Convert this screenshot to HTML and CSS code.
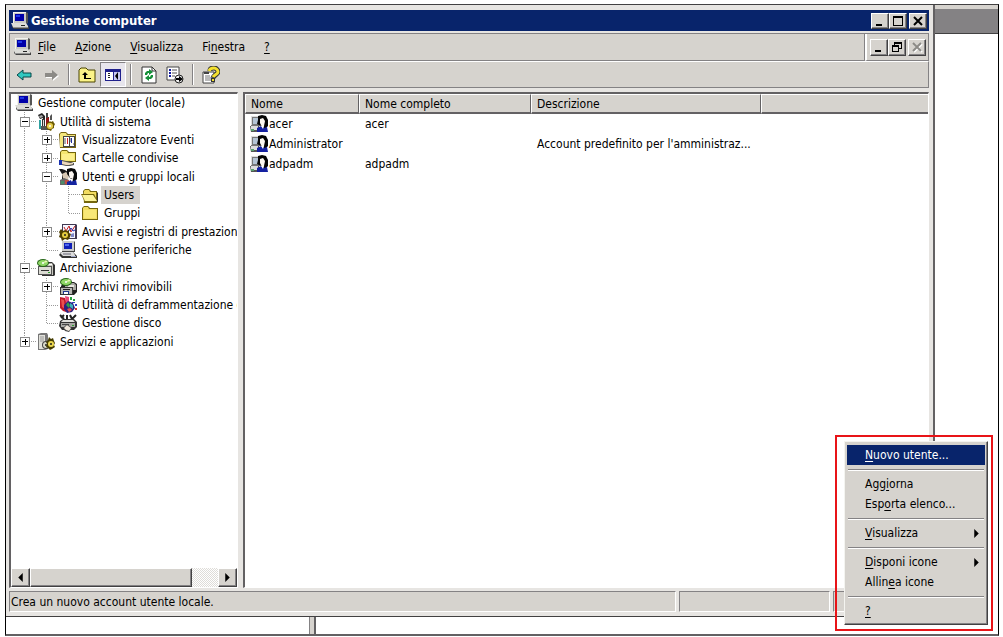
FILE: index.html
```html
<!DOCTYPE html>
<html lang="it">
<head>
<meta charset="utf-8">
<title>Gestione computer</title>
<link rel="stylesheet" href="styles.css">
</head>
<body>
<svg class="defs" aria-hidden="true">
  <symbol id="computer" viewBox="0 0 18 18">
    <path d="M3 0h12l2 1v10l-2 1H3z" fill="#555"/><path d="M2 0h13v11H2z" fill="#c8c8c4"/><path d="M2 0h13v1H3v10H2z" fill="#f4f4f0"/>
    <path d="M4 2h9v7H4z" fill="#0000a8"/><path d="M5 3h4v2H5z" fill="#2038e8"/>
    <path d="M1 12h14l3 3v2H3l-2-2z" fill="#444"/><path d="M0 11h15l2 3v1H2z" fill="#dcdcd8"/><path d="M2 15h15v1H2z" fill="#909090"/><path d="M10 13h4v1h-4z" fill="#222"/>
  </symbol>
  <symbol id="tools" viewBox="0 0 18 18">
    <path d="M1 2l4-2 3 3v5H6V5L3 6z" fill="#222"/><path d="M2 3l3-1 1 2-3 1z" fill="#a8a8a8"/>
    <path d="M2 7h2v9H2z" fill="#30a0a0"/><path d="M5 6h3v11H5z" fill="#333"/><path d="M6 7h1v9H6z" fill="#ddd"/>
    <path d="M9 4h3v10H9z" fill="#901818"/><path d="M9 0h2v5H9z" fill="#444"/><path d="M13 3l2-2v6h-2z" fill="#555"/><path d="M4 13h8v4H4z" fill="#555"/>
    <path d="M13 8l1 1 2-1 1 2 1 1-1 2v2l-2 1-1 2-2-1-2-1-1-2 1-2v-2l2-1z" fill="#6b5a00"/><circle cx="13" cy="13" r="3" fill="#e8cf50"/><circle cx="13" cy="13" r="1" fill="#fff"/>
  </symbol>
  <symbol id="eventi" viewBox="0 0 18 18">
    <path d="M0 3l2-2h5l2 2h8v14H1z" fill="#786410"/><path d="M1 3l1-1h5l1 2h8v12H1z" fill="#f4e67c"/>
    <path d="M4 5h12v11H4z" fill="#444"/><path d="M5 6h5v9H5zM11 6h4v9h-4z" fill="#fff"/><path d="M5 8h2M5 10h2M5 12h2M11 8h1M11 10h1M14 13h1" stroke="#555"/><path d="M8 7h1v6H8z" fill="#d02020"/><path d="M12 7h1v5h-1z" fill="#2030a0"/>
  </symbol>
  <symbol id="condivise" viewBox="0 0 18 18">
    <path d="M1 3l2-2h5l2 2h7v10H1z" fill="#74660c"/><path d="M2 3l1-1h5l1 2h7v8H2z" fill="#f4e670"/><path d="M3 5h12v6H3z" fill="#fcf08c"/>
    <path d="M0 11h3v5H0z" fill="#1830b0"/><path d="M3 11l4 1 5 1 3 1v2l-4 1H7l-4-1z" fill="#555"/><path d="M3 12l4 1 4 1h3v1l-4 1H7l-4-1z" fill="#edd8ba"/>
  </symbol>
  <symbol id="utenti" viewBox="0 0 18 18">
    <path d="M0 1h3l3 1 3 2v8H3V6z" fill="#181818"/><path d="M3 6l4-2 3 3-1 5-3 1-2-3z" fill="#d8c8b4"/>
    <path d="M1 12l4-2 5 2v5H1z" fill="#686868"/><path d="M2 13h3v3H2z" fill="#4c8c68"/><path d="M6 12h4v4H6z" fill="#c05040"/>
    <path d="M8 1l4-1 4 1 2 4v6l-3 3-4-4-3-4z" fill="#080808"/><path d="M10 4l3-1 2 3-1 5-3-1-1-3z" fill="#fbf6f0"/>
    <path d="M8 14l4-2 2 1 3-1 1 5H8z" fill="#1424a0"/><path d="M11 11h3l-1 3z" fill="#fff"/>
  </symbol>
  <symbol id="aperta" viewBox="0 0 18 18">
    <path d="M2 5l2-2h4l2 2h6v12H3z" fill="#74660c"/><path d="M3 5l1-1h4l1 2h6v9H3z" fill="#f2dc60"/><path d="M0 8h13l4 8H4z" fill="#74660c"/><path d="M1 9h11l4 6H4z" fill="#fcf49c"/><path d="M16 6l1 1v10l-1-2z" fill="#333"/>
  </symbol>
  <symbol id="cartella" viewBox="0 0 18 18">
    <path d="M1 4l2-2h4l2 2h8v12H1z" fill="#74660c"/><path d="M2 4l1-1h4l1 2h8v10H2z" fill="#f2dc60"/><path d="M3 6h12v8H3z" fill="#f8e878"/>
  </symbol>
  <symbol id="avvisi" viewBox="0 0 18 18">
    <path d="M3 1h14l1 1v14H3z" fill="#403850"/><path d="M4 2h12v13H4z" fill="#f6f6ff"/><path d="M5 4l2 4 3-5 2 6 4-6" fill="none" stroke="#c02020"/><path d="M9 9l3-4 2 3 2-1" fill="none" stroke="#2030b0"/><path d="M12 11l3-1v4h-3z" fill="#8088c8"/>
    <path d="M2 6l2 2 2-1 2 1 2-1v3l2 1-1 3-2 3-3-1-3 2-1-3-2-1 1-3-1-2z" fill="#504000"/><circle cx="6" cy="12" r="3" fill="#e4cc40"/><circle cx="6" cy="12" r="1" fill="#222"/>
  </symbol>
  <symbol id="periferiche" viewBox="0 0 18 18">
    <path d="M3 0h12l1 1v10H3z" fill="#444"/><path d="M3 0h12v10H3z" fill="#ccc"/><path d="M5 2h8v6H5z" fill="#1020b8"/><path d="M6 3h4v2H6z" fill="#5068f0"/>
    <path d="M2 11h12l4 4v2H3l-3-3z" fill="#333"/><path d="M1 12l2-1h11l2 3v1H4z" fill="#dcdcdc"/><path d="M4 13h8" stroke="#667"/><path d="M12 15h5v1h-5z" fill="#a0a8c8"/>
  </symbol>
  <symbol id="archiviazione" viewBox="0 0 18 18">
    <path d="M5 3h10l3 3v10l-1 1H5z" fill="#333"/><path d="M6 5l9-1 1 2v10H6z" fill="#c8c8c0"/><path d="M11 5h4v1h-4z" fill="#fff"/><path d="M1 7h14v9H1z" fill="#555"/><path d="M2 8h12v7H2z" fill="#dcdcd4"/><path d="M4 11h8v1H4z" fill="#333"/><path d="M11 13h2v1h-2z" fill="#30a030"/>
    <ellipse cx="6" cy="4" rx="6" ry="4" fill="#286818"/><ellipse cx="6" cy="4" rx="5" ry="3" fill="#90d868"/><path d="M6 4l3-3 2 2z" fill="#e8f8b0"/><circle cx="6" cy="4" r="1" fill="#fff"/>
  </symbol>
  <symbol id="rimovibili" viewBox="0 0 18 18">
    <path d="M5 4h10l3 2v8l-3 3H2V8z" fill="#222"/><path d="M6 5h9l2 2v5H6z" fill="#a8a8a4"/><path d="M9 7h6v2H9z" fill="#e8e8e0"/><path d="M1 9h13v8H1z" fill="#333"/><path d="M2 10h11v6H2z" fill="#b8b8b4"/><path d="M4 11h7v1H4z" fill="#222"/><path d="M4 13h6v3H4z" fill="#203890"/><path d="M5 14h4v2H5z" fill="#fff"/>
    <ellipse cx="7" cy="4" rx="6" ry="4" fill="#286818"/><ellipse cx="7" cy="4" rx="5" ry="3" fill="#90d868"/><path d="M7 4l3-3 2 2z" fill="#e8f8b0"/><circle cx="7" cy="4" r="1" fill="#fff"/>
  </symbol>
  <symbol id="deframmentazione" viewBox="0 0 18 18">
    <path d="M1 1l5 1 2 6-1 8-3-1-3-3z" fill="#c01828"/><path d="M6 0l4 1v7L7 8z" fill="#e84878"/><path d="M2 3l3 1 1 9-3-2z" fill="#ec5050"/>
    <path d="M5 9l4-4 5 2 2 5-3 4-5 1-3-4z" fill="#302080"/><path d="M7 9l2-3 2 3-1 3z" fill="#30a048"/><path d="M11 7l3 2v4l-3-2z" fill="#40b0b8"/><path d="M8 13l3-1 2 2-3 2z" fill="#e05050"/>
    <path d="M11 1h2v3h-2zM14 3h2v2h-2z" fill="#28a040"/><path d="M13 6h3v1h-3zM16 8h2v2h-2z" fill="#3040c0"/><path d="M16 12h2v2h-2z" fill="#d03030"/>
  </symbol>
  <symbol id="disco" viewBox="0 0 18 18">
    <path d="M1 1l4 4M5 1L2 4M8 1v4M11 1l2 4 4-4" fill="none" stroke="#222" stroke-width="2"/><path d="M1 7l3-2h11l3 3v5l-3 3H3l-3-4z" fill="#333"/><path d="M4 6h10l2 2H2z" fill="#e0e0dc"/><path d="M2 9h14v4H2z" fill="#a8a8a4"/><path d="M3 10h7v1H3z" fill="#444"/><path d="M13 11h2v1h-2z" fill="#30a030"/><path d="M4 14l4-4 5 4-3 4-4-1z" fill="#444"/><path d="M5 14l3-3 4 3-2 3-3-1z" fill="#f0e8dc"/>
  </symbol>
  <symbol id="servizi" viewBox="0 0 18 18">
    <path d="M1 1l3-1h6l1 2v14l-3 1H1z" fill="#777"/><path d="M2 2h6v14H2z" fill="#e0e0da"/><path d="M3 4h4M3 6h4M3 8h4" stroke="#999"/>
    <circle cx="9" cy="12" r="4" fill="#444"/><circle cx="9" cy="12" r="3" fill="#d8d8c8"/><circle cx="9" cy="12" r="1" fill="#222"/>
    <path d="M12 4l2 2 2-1 1 3 1 2-1 2 1 2-3 2-2 1-2-2-2-1 1-3-1-2 2-2z" fill="#443c00"/><circle cx="14" cy="11" r="3" fill="#ecd850"/><circle cx="14" cy="11" r="1" fill="#222"/>
  </symbol>
  <symbol id="utente" viewBox="0 0 18 18">
    <path d="M1 1h9v10H1z" fill="#777"/><path d="M1 1h8v1H2v8H1z" fill="#ddd"/><path d="M3 3h6v6H3z" fill="#b4c4d4"/><path d="M0 11h9v6H1z" fill="#555"/><path d="M1 11h7v4H1z" fill="#ddd"/><path d="M1 14h3v2H1z" fill="#58a070"/>
    <path d="M8 1l4-1 4 1 2 4v6l-3 3-4-3-4-2 1-4z" fill="#050505"/><path d="M10 4l3-1 2 3-1 5-2 1-2-4z" fill="#fbf6f0"/><path d="M7 13l4-2 3 2 3-1 1 5H7z" fill="#1420a0"/><path d="M11 11h3l-1 3z" fill="#fff"/>
  </symbol>
</svg>

<div class="desktop">
  <div class="backdrop">
    <div class="backdrop-title"></div>
    <div class="backdrop-body"><div class="backdrop-split"></div></div>
  </div>

  <main class="window">
    <header class="titlebar">
      <svg class="icon"><use href="#computer"/></svg>
      <h1>Gestione computer</h1>
      <div class="controls">
        <button class="ctl" aria-label="Riduci a icona"><svg viewBox="0 0 12 12"><path d="M2 9h6v2H2z"/></svg></button>
        <button class="ctl" aria-label="Ingrandisci"><svg viewBox="0 0 12 12"><path d="M1 1h10v10H1zM2 3v7h8V3z" fill-rule="evenodd"/></svg></button>
        <button class="ctl apart" aria-label="Chiudi"><svg viewBox="0 0 12 12"><path d="M2 2l8 8M10 2l-8 8" stroke="#000" stroke-width="2"/></svg></button>
      </div>
    </header>

    <div class="menubar">
      <nav class="menus">
        <svg class="icon"><use href="#computer"/></svg>
        <button><u>F</u>ile</button>
        <button><u>A</u>zione</button>
        <button><u>V</u>isualizza</button>
        <button>Fi<u>n</u>estra</button>
        <button><u>?</u></button>
      </nav>
      <div class="controls child">
        <button class="ctl" aria-label="Riduci finestra"><svg viewBox="0 0 12 12"><path d="M2 9h6v2H2z"/></svg></button>
        <button class="ctl" aria-label="Ripristina finestra"><svg viewBox="0 0 12 12"><path d="M3 1h8v7H8v3H1V4h2zM4 3v1h4v3h2V3zM2 6v4h5V6z" fill-rule="evenodd"/></svg></button>
        <button class="ctl apart" aria-label="Chiudi finestra" disabled><svg viewBox="0 0 12 12"><path d="M3 3l8 8M11 3l-8 8" stroke="#fff" stroke-width="2"/><path d="M2 2l8 8M10 2l-8 8" stroke="#8c8a86" stroke-width="2"/></svg></button>
      </div>
    </div>

    <div class="toolbar">
      <button aria-label="Indietro"><svg viewBox="0 0 18 18"><path d="M1 9l6-5v3h8v4H7v3z" fill="#30c8c0" stroke="#064848"/></svg></button>
      <button aria-label="Avanti" disabled><svg viewBox="0 0 18 18"><path d="M17 10l-6-5v3H4v4h7v3z" fill="#fff"/><path d="M16 9l-6-5v3H3v4h7v3z" fill="#8c8a86"/></svg></button>
      <span class="sep"></span>
      <button aria-label="Livello superiore"><svg viewBox="0 0 18 18"><path d="M1 4l2-2h5l2 2h7v12H1z" fill="#fbf388" stroke="#4a4400"/><path d="M7 6l3 3H8v3h5v1H6V9H4z" fill="#000"/></svg></button>
      <button class="pressed" aria-label="Mostra/Nascondi struttura"><svg viewBox="0 0 18 18"><path d="M1 3h16v12H1z" fill="#20208c"/><path d="M2 6h7v8H2z" fill="#fff"/><path d="M10 6h6v8h-6z" fill="#c8c8f0"/><path d="M4 7h2v1H4zM4 9h2v1H4zM4 11h2v1H4z" fill="#222"/><path d="M14 6v8l-3-4z" fill="#000"/></svg></button>
      <span class="sep"></span>
      <button aria-label="Aggiorna"><svg viewBox="0 0 18 18"><path d="M2 1h10l4 4v12H2z" fill="#fff" stroke="#333"/><path d="M12 1v4h4" fill="none" stroke="#333"/><path d="M5 9V7l2-2h2V3l4 3-4 3V7H8L7 9zM13 9v2l-2 2H9v2l-4-3 4-3v2h1l1-2z" fill="#149038"/></svg></button>
      <button aria-label="Esporta elenco"><svg viewBox="0 0 18 18"><path d="M1 1h12v13H1z" fill="#fff" stroke="#444"/><path d="M3 4h2M3 7h2M3 10h2" stroke="#111aa0" stroke-width="2"/><path d="M6 4h5M6 7h5M6 10h3" stroke="#555"/><circle cx="13" cy="13" r="4" fill="#eee" stroke="#222"/><path d="M10 12h3v-2l4 3-4 3v-2h-3z" fill="#000"/></svg></button>
      <span class="sep"></span>
      <button aria-label="Guida"><svg viewBox="0 0 18 18"><path d="M1 6h11v11H1z" fill="#fff" stroke="#444"/><path d="M2 6h5v2H2z" fill="#444"/><path d="M3 10h5M3 12h7M3 14h6" stroke="#777"/><path d="M8 5c0-3 2-3 4-3s4 2 4 4-4 3-5 6" fill="none" stroke="#333" stroke-width="5"/><path d="M7 5c1-3 3-3 5-3s4 2 4 4-4 3-5 5" fill="none" stroke="#f4e030" stroke-width="3"/><path d="M9 12h4v4H9z" fill="#333"/><path d="M10 13h2v2h-2z" fill="#f4e030"/></svg></button>
    </div>

    <div class="panes">
      <section class="pane tree-pane">
        <ul class="tree">
          <li><svg class="icon"><use href="#computer"/></svg><span>Gestione computer (locale)</span></li>
          <li><i class="g tee"><button class="tog" aria-label="Comprimi"></button></i><svg class="icon"><use href="#tools"/></svg><span>Utilità di sistema</span></li>
          <li><i class="g line"></i><i class="g tee"><button class="tog plus" aria-label="Espandi"></button></i><svg class="icon"><use href="#eventi"/></svg><span>Visualizzatore Eventi</span></li>
          <li><i class="g line"></i><i class="g tee"><button class="tog plus" aria-label="Espandi"></button></i><svg class="icon"><use href="#condivise"/></svg><span>Cartelle condivise</span></li>
          <li><i class="g line"></i><i class="g tee"><button class="tog" aria-label="Comprimi"></button></i><svg class="icon"><use href="#utenti"/></svg><span>Utenti e gruppi locali</span></li>
          <li><i class="g line"></i><i class="g line"></i><i class="g tee"></i><svg class="icon"><use href="#aperta"/></svg><span class="selected">Users</span></li>
          <li><i class="g line"></i><i class="g line"></i><i class="g end"></i><svg class="icon"><use href="#cartella"/></svg><span>Gruppi</span></li>
          <li><i class="g line"></i><i class="g tee"><button class="tog plus" aria-label="Espandi"></button></i><svg class="icon"><use href="#avvisi"/></svg><span>Avvisi e registri di prestazioni</span></li>
          <li><i class="g line"></i><i class="g end"></i><svg class="icon"><use href="#periferiche"/></svg><span>Gestione periferiche</span></li>
          <li><i class="g tee"><button class="tog" aria-label="Comprimi"></button></i><svg class="icon"><use href="#archiviazione"/></svg><span>Archiviazione</span></li>
          <li><i class="g line"></i><i class="g tee"><button class="tog plus" aria-label="Espandi"></button></i><svg class="icon"><use href="#rimovibili"/></svg><span>Archivi rimovibili</span></li>
          <li><i class="g line"></i><i class="g tee"></i><svg class="icon"><use href="#deframmentazione"/></svg><span>Utilità di deframmentazione d</span></li>
          <li><i class="g line"></i><i class="g end"></i><svg class="icon"><use href="#disco"/></svg><span>Gestione disco</span></li>
          <li><i class="g end"><button class="tog plus" aria-label="Espandi"></button></i><svg class="icon"><use href="#servizi"/></svg><span>Servizi e applicazioni</span></li>
        </ul>
        <div class="scrollbar">
          <button class="arrow" aria-label="Scorri a sinistra"><svg viewBox="0 0 8 8"><path d="M6 0v8L2 4z"/></svg></button>
          <div class="track"><div class="thumb"></div></div>
          <button class="arrow" aria-label="Scorri a destra"><svg viewBox="0 0 8 8"><path d="M2 0v8l4-4z"/></svg></button>
        </div>
      </section>
      <section class="pane list-pane">
        <table>
          <colgroup><col class="c-name"><col class="c-full"><col class="c-desc"><col></colgroup>
          <thead><tr><th>Nome</th><th>Nome completo</th><th>Descrizione</th><th></th></tr></thead>
          <tbody>
            <tr><td class="name"><div><svg class="icon"><use href="#utente"/></svg>acer</div></td><td>acer</td><td></td><td></td></tr>
            <tr><td class="name"><div><svg class="icon"><use href="#utente"/></svg>Administrator</div></td><td></td><td>Account predefinito per l'amministraz...</td><td></td></tr>
            <tr><td class="name"><div><svg class="icon"><use href="#utente"/></svg>adpadm</div></td><td>adpadm</td><td></td><td></td></tr>
          </tbody>
        </table>
      </section>
    </div>

    <footer class="status"><span class="msg">Crea un nuovo account utente locale.</span><span class="mid"></span><span class="last"></span></footer>
  </main>

  <div class="highlight">
    <div class="popup" role="menu">
      <button role="menuitem" class="active"><span><u>N</u>uovo utente...</span></button>
      <hr>
      <button role="menuitem"><span>Agg<u>i</u>orna</span></button>
      <button role="menuitem"><span>Esp<u>o</u>rta elenco...</span></button>
      <hr>
      <button role="menuitem"><span><u>V</u>isualizza</span><svg viewBox="0 0 8 8"><path d="M2 0v8l4-4z"/></svg></button>
      <hr>
      <button role="menuitem"><span><u>D</u>isponi icone</span><svg viewBox="0 0 8 8"><path d="M2 0v8l4-4z"/></svg></button>
      <button role="menuitem"><span>Allin<u>e</u>a icone</span></button>
      <hr>
      <button role="menuitem"><span><u>?</u></span></button>
    </div>
  </div>
</div>
</body>
</html>
```
FILE: styles.css
```css
* { box-sizing: border-box; }
:root {
  --face: #d6d3ce;
  --light: #ffffff;
  --shade: #848284;
  --mid: #636163;
  --dark: #424142;
  --navy: #08246b;
}
body {
  margin: 0;
  background: #fff;
  color: #000;
  font: 12px/16px "DejaVu Sans Condensed", "DejaVu Sans", sans-serif;
}
button {
  margin: 0;
  padding: 0;
  border: 0;
  background: none;
  color: inherit;
  font: inherit;
}
u { text-underline-offset: 2px; }
.defs { position: absolute; width: 0; height: 0; }
.icon { flex: none; width: 18px; height: 18px; }

.desktop {
  position: relative;
  height: calc(100vh - 5px);
  margin: 4px 4px 0 5px;
  border: 1px solid #000;
  border-top-color: var(--dark);
  border-bottom: 2px solid var(--mid);
}
.backdrop { display: flex; flex-direction: column; height: 100%; }
.backdrop-title {
  height: 29px;
  border-top: 4px solid var(--face);
  border-bottom: 1px solid var(--dark);
  background: var(--shade);
}
.backdrop-body { flex: 1; display: flex; }
.backdrop-split {
  width: 310px;
  border-right: 2px solid var(--mid);
  box-shadow: inset -4px 0 var(--face), inset -5px 0 var(--shade);
}

.window {
  position: absolute;
  inset: 0 63px 17px 0;
  display: flex;
  flex-direction: column;
  padding: 5px 4px 4px 3px;
  border-right: 2px solid var(--mid);
  border-bottom: 1px solid var(--dark);
  background: #e7e5e2;
}
.titlebar {
  display: flex;
  align-items: center;
  height: 21px;
  padding: 0 2px;
  background: var(--navy);
  color: #fff;
}
.titlebar h1 { flex: 1; margin: 0 0 0 2px; font-size: 13px; line-height: 20px; }
.controls { display: flex; }
.ctl {
  display: grid;
  place-items: center;
  width: 18px;
  height: 16px;
  border: 1px solid;
  border-color: var(--light) var(--dark) var(--dark) var(--light);
  box-shadow: inset -1px -1px var(--shade);
  background: var(--face);
}
.ctl svg { width: 12px; height: 12px; }
.apart { margin-left: 2px; }

.menubar {
  display: flex;
  height: 28px;
  margin-top: 2px;
  border-top: 1px solid var(--shade);
  border-left: 1px solid var(--shade);
  background: var(--face);
}
.menus {
  flex: 1;
  display: flex;
  align-items: center;
  padding-left: 3px;
  border-right: 1px solid var(--shade);
  border-bottom: 1px solid var(--shade);
}
.menus button { margin-left: 19px; }
.menus .icon + button { margin-left: 7px; }
.child {
  align-items: center;
  padding: 0 2px 0 3px;
  border-left: 2px solid var(--light);
  border-right: 1px solid var(--shade);
  border-bottom: 1px solid var(--shade);
}
.child .ctl { height: 17px; }

.toolbar {
  display: flex;
  align-items: center;
  height: 27px;
  padding: 0 2px;
  border: 1px solid var(--shade);
  border-top-color: var(--light);
  background: var(--face);
}
.toolbar button {
  display: grid;
  place-items: center;
  width: 26px;
  height: 25px;
}
.toolbar svg { width: 18px; height: 18px; }
.toolbar .pressed {
  border: 1px solid;
  border-color: var(--shade) var(--light) var(--light) var(--shade);
  background: #e7e5ec;
}
.sep {
  width: 2px;
  height: 21px;
  margin: 0 4px;
  border-left: 1px solid var(--shade);
  border-right: 1px solid var(--light);
}

.panes { flex: 1; display: flex; gap: 5px; min-height: 0; margin-top: 4px; }
.pane {
  min-width: 0;
  border: solid;
  border-width: 2px 1px 1px 2px;
  border-color: var(--mid) var(--light) var(--light) var(--mid);
  background: #fff;
}
.tree-pane { flex: none; display: flex; flex-direction: column; width: 229px; }
.tree {
  display: flex;
  flex-direction: column;
  height: 257px;
  margin: 0;
  padding: 0 0 0 4px;
  overflow: hidden;
  list-style: none;
}
.tree li { flex: 1; display: flex; align-items: center; white-space: nowrap; }
.tree li > span { margin-left: 2px; padding: 0 3px; }
.tree .selected { padding: 1px 6px 1px 3px; background: var(--face); }
.g {
  --dots: repeating-linear-gradient(#9a9a9a 0 1px, #fff 1px 2px);
  --dash: repeating-linear-gradient(90deg, #9a9a9a 0 1px, #fff 1px 2px);
  flex: none;
  display: flex;
  align-items: center;
  align-self: stretch;
  width: 22px;
  padding-left: 5px;
  background: var(--dots) 9px 0 / 1px 100% no-repeat;
}
.tee { background: var(--dots) 9px 0 / 1px 100% no-repeat, var(--dash) 10px 50% / 12px 1px no-repeat; }
.end { background: var(--dots) 9px 0 / 1px 50% no-repeat, var(--dash) 10px 50% / 12px 1px no-repeat; }
.tog {
  width: 10px;
  height: 10px;
  border: 1px solid #8a8a8a;
  background: linear-gradient(#000, #000) center / 6px 1px no-repeat, #fff;
}
.plus {
  background: linear-gradient(#000, #000) center / 6px 1px no-repeat, linear-gradient(#000, #000) center / 1px 6px no-repeat, #fff;
}

.scrollbar { display: flex; height: 19px; margin-top: auto; }
.arrow, .thumb {
  border: 1px solid;
  border-color: var(--light) var(--dark) var(--dark) var(--light);
  box-shadow: inset -1px -1px var(--shade);
  background: var(--face);
}
.arrow { display: grid; place-items: center; width: 19px; }
.arrow svg { width: 9px; height: 9px; }
.track {
  flex: 1;
  display: flex;
  background: repeating-conic-gradient(#fff 0 25%, #dedcd8 0 50%) 0 0 / 2px 2px;
}
.thumb { width: 86%; }

.list-pane { flex: 1; }
table { width: 100%; border-collapse: separate; border-spacing: 0; table-layout: fixed; }
.c-name { width: 114px; }
.c-full { width: 172px; }
.c-desc { width: 230px; }
th {
  height: 19px;
  padding: 1px 5px 0;
  border: 1px solid;
  border-color: var(--light) var(--mid) var(--mid) var(--light);
  border-bottom-width: 2px;
  background: var(--face);
  font-weight: normal;
  text-align: left;
}
th:last-child { border-right: 0; }
td { height: 20px; padding: 0 6px; white-space: nowrap; overflow: hidden; }
.name { padding: 0 0 0 5px; }
.name div { display: flex; align-items: center; gap: 1px; }

.status { display: flex; gap: 3px; height: 21px; margin-top: 3px; }
.status span {
  border: 1px solid;
  border-color: var(--shade) var(--light) var(--light) var(--shade);
  background: var(--face);
  line-height: 20px;
}
.msg { flex: 1; padding-left: 1px; }
.mid { width: 151px; }
.last { width: 96px; }

.highlight {
  position: absolute;
  right: 5px;
  bottom: 3px;
  padding: 4px 3px 4px 7px;
  border: 2px solid #e81418;
}
.popup {
  display: flex;
  flex-direction: column;
  width: 144px;
  padding: 3px 2px;
  border: 1px solid;
  border-color: #f4f4f0 var(--dark) var(--dark) #f4f4f0;
  box-shadow: inset -1px -1px var(--shade);
  background: var(--face);
}
.popup button {
  display: flex;
  align-items: center;
  justify-content: space-between;
  height: 20px;
  padding: 0 4px 0 18px;
}
.popup .active { background: var(--navy); color: #fff; }
.popup svg { width: 9px; height: 9px; }
.popup hr {
  height: 2px;
  margin: 4px 1px 3px;
  border: 0;
  border-top: 1px solid var(--shade);
  border-bottom: 1px solid var(--light);
}
```
